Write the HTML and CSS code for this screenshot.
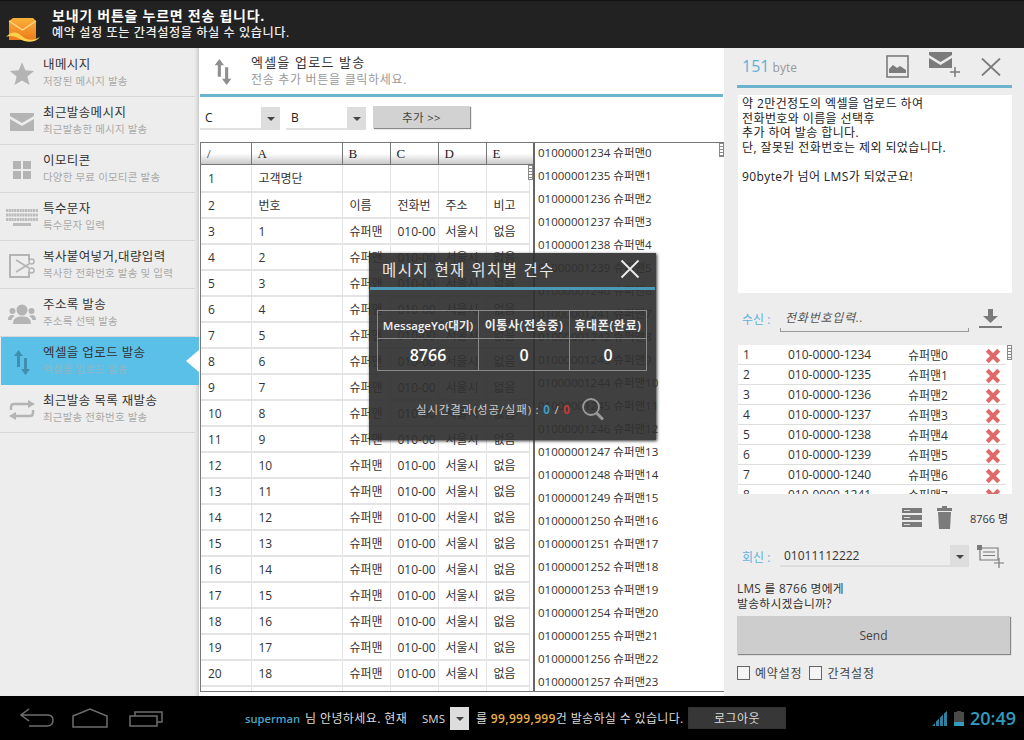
FILE: index.html
```html
<!DOCTYPE html>
<html lang="ko">
<head>
    <meta charset="UTF-8">
    <title>MessageYo</title>
    <link rel="stylesheet" href="styles.css">
</head>
<body>
<div class="app">

    <!-- top notice -->
    <div class="topbar">
        <svg class="top-mail" width="36" height="32" viewBox="0 0 36 32">
            <defs><linearGradient id="mailg" x1="0" y1="0" x2="0" y2="1"><stop offset="0" stop-color="#f9b13a"/><stop offset="1" stop-color="#ee7a1c"/></linearGradient></defs>
            <path d="M4 11 L8 8 H28 L31 11 V30 H4 Z" fill="url(#mailg)"/>
            <path d="M4 11 L17.500 20 L31 11" fill="none" stroke="#ffd98a" stroke-width="1.200"/>
            <path d="M1 27 C7 20 13 22 18 27 C23 31 30 30 35 27 C30 33 21 33 15 29 C10 26 5 25 1 27 Z" fill="#fbd24e"/>
        </svg>
        <div class="top-text">
            <div class="top-title">보내기 버튼을 누르면 전송 됩니다.</div>
            <div class="top-sub">예약 설정 또는 간격설정을 하실 수 있습니다.</div>
        </div>
    </div>

    <div class="middle">
        <!-- left menu -->
        <div class="menu">
            <div class="menu-item">
                <div class="menu-icon"><svg width="26" height="25" viewBox="0 0 28 26"><polygon class="ico" points="14,1 17.6,9.6 27,10.3 19.8,16.3 22.1,25.5 14,20.5 5.9,25.5 8.2,16.3 1,10.3 10.4,9.6"/></svg></div>
                <div><div class="menu-title">내메시지</div><div class="menu-sub">저장된 메시지 발송</div></div>
            </div>
            <div class="menu-item">
                <div class="menu-icon"><svg width="24" height="18" viewBox="0 0 24 18"><path class="ico" d="M0 0 H24 V3 L12 10 L0 3 Z M0 6 L12 13 L24 6 V18 H0 Z"/></svg></div>
                <div><div class="menu-title">최근발송메시지</div><div class="menu-sub">최근발송한 메시지 발송</div></div>
            </div>
            <div class="menu-item">
                <div class="menu-icon"><svg width="18" height="18" viewBox="0 0 18 18"><path class="ico" d="M0 0 H8 V8 H0 Z M10 0 H18 V8 H10 Z M0 10 H8 V18 H0 Z M10 10 H18 V18 H10 Z"/></svg></div>
                <div><div class="menu-title">이모티콘</div><div class="menu-sub">다양한 무료 이모티콘 발송</div></div>
            </div>
            <div class="menu-item">
                <div class="menu-icon"><svg width="32" height="18" viewBox="0 0 32 18"><path d="M0 1.5 H32 M0 6 H32 M0 10.500 H32" stroke="#bcbcbc" stroke-width="3" stroke-dasharray="2.200 .5"/><path d="M7 15.500 H25" stroke="#bcbcbc" stroke-width="3"/></svg></div>
                <div><div class="menu-title">특수문자</div><div class="menu-sub">특수문자 입력</div></div>
            </div>
            <div class="menu-item">
                <div class="menu-icon"><svg width="26" height="24" viewBox="0 0 26 24"><path d="M20 6 V1 H1 V23 H20 V18" fill="none" stroke="#b4b4b4" stroke-width="2"/><path d="M7 6 L20 14 M7 18 L20 10" stroke="#b4b4b4" stroke-width="1.600"/><circle cx="22.500" cy="7.500" r="2.500" fill="none" stroke="#b4b4b4" stroke-width="1.500"/><circle cx="22.500" cy="16.500" r="2.500" fill="none" stroke="#b4b4b4" stroke-width="1.500"/></svg></div>
                <div><div class="menu-title">복사붙여넣거,대량입력</div><div class="menu-sub">복사한 전화번호 발송 및 입력</div></div>
            </div>
            <div class="menu-item">
                <div class="menu-icon"><svg width="28" height="20" viewBox="0 0 28 20"><circle class="ico" cx="14" cy="6" r="5.500"/><path class="ico" d="M5 20 C5 14 9 12.500 14 12.500 C19 12.500 23 14 23 20 Z"/><circle class="ico" cx="4.500" cy="7" r="3"/><circle class="ico" cx="23.500" cy="7" r="3"/><path class="ico" d="M0 16 C0 12 2 11 4.500 11 L7 12 C5 13 4 14 3.500 16 Z M28 16 C28 12 26 11 23.500 11 L21 12 C23 13 24 14 24.500 16 Z"/></svg></div>
                <div><div class="menu-title">주소록 발송</div><div class="menu-sub">주소록 선택 발송</div></div>
            </div>
            <div class="menu-item active">
                <div class="menu-icon"><svg width="16" height="25" viewBox="0 0 16 25"><path class="ico-on" d="M4.500 0 L9 6 H6 V17 H3 V6 H0 Z M11.500 25 L7 19 H10 V8 H13 V19 H16 Z"/></svg></div>
                <div><div class="menu-title">엑셀을 업로드 발송</div><div class="menu-sub">엑셀을 업로드 발송</div></div>
            </div>
            <div class="menu-item">
                <div class="menu-icon"><svg width="26" height="20" viewBox="0 0 26 20"><path d="M2 10 V7 Q2 4 5 4 H20 M24 10 V13 Q24 16 21 16 H6" fill="none" stroke="#b4b4b4" stroke-width="2.400"/><path class="ico" d="M19 0 L26 4 L19 8 Z M7 12 L0 16 L7 20 Z"/></svg></div>
                <div><div class="menu-title">최근발송 목록 재발송</div><div class="menu-sub">최근발송 전화번호 발송</div></div>
            </div>
        </div>

        <!-- excel upload -->
        <div class="main">
            <div class="main-head">
                <svg class="main-arrows" width="20" height="26" viewBox="0 0 16 25"><path fill="#8f8f8f" d="M4.500 0 L9 6 H6 V17 H3 V6 H0 Z M11.500 25 L7 19 H10 V8 H13 V19 H16 Z"/></svg>
                <div>
                    <div class="main-title">엑셀을 업로드 발송</div>
                    <div class="main-sub">전송 추가 버튼을 클릭하세요.</div>
                </div>
            </div>
            <div class="tools">
                <div class="pick"><span class="pick-val">C</span><span class="drop"></span></div>
                <div class="pick"><span class="pick-val">B</span><span class="drop"></span></div>
                <button class="btn add-btn">추가 &gt;&gt;</button>
            </div>
            <div class="sheet-area">
                <div class="sheet">
                    <table class="sheet-head">
                        <tr><th class="c0">/</th><th class="c1">A</th><th class="c2">B</th><th class="c2">C</th><th class="c2">D</th><th class="c5">E</th></tr>
                    </table>
                    <table class="sheet-body">
                        <tr class="first"><td class="c0">1</td><td class="c1">고객명단</td><td class="c2"></td><td class="c2"></td><td class="c2"></td><td class="c6"></td></tr>
                        <tr><td>2</td><td>번호</td><td>이름</td><td>전화번</td><td>주소</td><td>비고</td></tr>
                        <tr><td>3</td><td>1</td><td>슈퍼맨</td><td>010-00</td><td>서울시</td><td>없음</td></tr>
                        <tr><td>4</td><td>2</td><td>슈퍼맨</td><td>010-00</td><td>서울시</td><td>없음</td></tr>
                        <tr><td>5</td><td>3</td><td>슈퍼맨</td><td>010-00</td><td>서울시</td><td>없음</td></tr>
                        <tr><td>6</td><td>4</td><td>슈퍼맨</td><td>010-00</td><td>서울시</td><td>없음</td></tr>
                        <tr><td>7</td><td>5</td><td>슈퍼맨</td><td>010-00</td><td>서울시</td><td>없음</td></tr>
                        <tr><td>8</td><td>6</td><td>슈퍼맨</td><td>010-00</td><td>서울시</td><td>없음</td></tr>
                        <tr><td>9</td><td>7</td><td>슈퍼맨</td><td>010-00</td><td>서울시</td><td>없음</td></tr>
                        <tr><td>10</td><td>8</td><td>슈퍼맨</td><td>010-00</td><td>서울시</td><td>없음</td></tr>
                        <tr><td>11</td><td>9</td><td>슈퍼맨</td><td>010-00</td><td>서울시</td><td>없음</td></tr>
                        <tr><td>12</td><td>10</td><td>슈퍼맨</td><td>010-00</td><td>서울시</td><td>없음</td></tr>
                        <tr><td>13</td><td>11</td><td>슈퍼맨</td><td>010-00</td><td>서울시</td><td>없음</td></tr>
                        <tr><td>14</td><td>12</td><td>슈퍼맨</td><td>010-00</td><td>서울시</td><td>없음</td></tr>
                        <tr><td>15</td><td>13</td><td>슈퍼맨</td><td>010-00</td><td>서울시</td><td>없음</td></tr>
                        <tr><td>16</td><td>14</td><td>슈퍼맨</td><td>010-00</td><td>서울시</td><td>없음</td></tr>
                        <tr><td>17</td><td>15</td><td>슈퍼맨</td><td>010-00</td><td>서울시</td><td>없음</td></tr>
                        <tr><td>18</td><td>16</td><td>슈퍼맨</td><td>010-00</td><td>서울시</td><td>없음</td></tr>
                        <tr><td>19</td><td>17</td><td>슈퍼맨</td><td>010-00</td><td>서울시</td><td>없음</td></tr>
                        <tr><td>20</td><td>18</td><td>슈퍼맨</td><td>010-00</td><td>서울시</td><td>없음</td></tr>
                        <tr><td></td><td></td><td></td><td></td><td></td><td></td></tr>
                    </table>
                    <span class="grip grip-sheet"></span>
                </div>
                <div class="numbers">
                    <span class="grip grip-nums"></span>
                    <div>01000001234 슈퍼맨0</div>
                    <div>01000001235 슈퍼맨1</div>
                    <div>01000001236 슈퍼맨2</div>
                    <div>01000001237 슈퍼맨3</div>
                    <div>01000001238 슈퍼맨4</div>
                    <div>01000001239 슈퍼맨5</div>
                    <div>01000001240 슈퍼맨6</div>
                    <div>01000001241 슈퍼맨7</div>
                    <div>01000001242 슈퍼맨8</div>
                    <div>01000001243 슈퍼맨9</div>
                    <div>01000001244 슈퍼맨10</div>
                    <div>01000001245 슈퍼맨11</div>
                    <div>01000001246 슈퍼맨12</div>
                    <div>01000001247 슈퍼맨13</div>
                    <div>01000001248 슈퍼맨14</div>
                    <div>01000001249 슈퍼맨15</div>
                    <div>01000001250 슈퍼맨16</div>
                    <div>01000001251 슈퍼맨17</div>
                    <div>01000001252 슈퍼맨18</div>
                    <div>01000001253 슈퍼맨19</div>
                    <div>01000001254 슈퍼맨20</div>
                    <div>01000001255 슈퍼맨21</div>
                    <div>01000001256 슈퍼맨22</div>
                    <div>01000001257 슈퍼맨23</div>
                </div>
            </div>
        </div>

        <!-- message composer -->
        <div class="side">
            <div class="side-top">
                <div class="bytes"><span class="bytes-num">151</span> <span class="bytes-unit">byte</span></div>
                <svg class="tool-img" width="23" height="23" viewBox="0 0 23 23"><rect x="1" y="1" width="21" height="21" fill="none" stroke="#7b7b7b" stroke-width="1.600"/><path fill="#7b7b7b" d="M3 18 V14 L7 10 L11 13 L14 11 L20 15 V18 Z"/></svg>
                <svg class="tool-mail" width="33" height="26" viewBox="0 0 33 26"><path fill="#7b7b7b" d="M0 0 H23 V3 L11.500 10 L0 3 Z M0 6 L11.500 13 L23 6 V16 H0 Z"/><path d="M26 15 V25 M21 20 H31" stroke="#7b7b7b" stroke-width="1.500"/></svg>
                <svg class="tool-x" width="20" height="18" viewBox="0 0 20 18"><path d="M1 0.500 L19 17.500 M19 0.500 L1 17.500" stroke="#7b7b7b" stroke-width="1.800"/></svg>
            </div>
            <div class="side-rule"></div>
            <div class="msg">약 2만건정도의 엑셀을 업로드 하여<br>전화번호와 이름을 선택후<br>추가 하여 발송 합니다.<br>단, 잘못된 전화번호는 제외 되었습니다.<br><br>90byte가 넘어 LMS가 되었군요!</div>

            <div class="to-row">
                <span class="blue-label">수신 :</span>
                <div class="to-input">전화번호입력..</div>
                <svg class="to-down" width="23" height="19" viewBox="0 0 23 19"><path fill="#7b7b7b" d="M9 0 H14 V7 H19 L11.500 14 L4 7 H9 Z"/><rect y="17" width="23" height="2" fill="#7b7b7b"/></svg>
            </div>

            <div class="to-list">
                <div class="to-item"><span class="n">1</span><span class="p">010-0000-1234</span><span class="w">슈퍼맨0</span><svg class="del" viewBox="0 0 14 14"><path d="M2 2 L12 12 M12 2 L2 12"/></svg></div>
                <div class="to-item"><span class="n">2</span><span class="p">010-0000-1235</span><span class="w">슈퍼맨1</span><svg class="del" viewBox="0 0 14 14"><path d="M2 2 L12 12 M12 2 L2 12"/></svg></div>
                <div class="to-item"><span class="n">3</span><span class="p">010-0000-1236</span><span class="w">슈퍼맨2</span><svg class="del" viewBox="0 0 14 14"><path d="M2 2 L12 12 M12 2 L2 12"/></svg></div>
                <div class="to-item"><span class="n">4</span><span class="p">010-0000-1237</span><span class="w">슈퍼맨3</span><svg class="del" viewBox="0 0 14 14"><path d="M2 2 L12 12 M12 2 L2 12"/></svg></div>
                <div class="to-item"><span class="n">5</span><span class="p">010-0000-1238</span><span class="w">슈퍼맨4</span><svg class="del" viewBox="0 0 14 14"><path d="M2 2 L12 12 M12 2 L2 12"/></svg></div>
                <div class="to-item"><span class="n">6</span><span class="p">010-0000-1239</span><span class="w">슈퍼맨5</span><svg class="del" viewBox="0 0 14 14"><path d="M2 2 L12 12 M12 2 L2 12"/></svg></div>
                <div class="to-item"><span class="n">7</span><span class="p">010-0000-1240</span><span class="w">슈퍼맨6</span><svg class="del" viewBox="0 0 14 14"><path d="M2 2 L12 12 M12 2 L2 12"/></svg></div>
                <div class="to-item"><span class="n">8</span><span class="p">010-0000-1241</span><span class="w">슈퍼맨7</span><svg class="del" viewBox="0 0 14 14"><path d="M2 2 L12 12 M12 2 L2 12"/></svg></div>
                <span class="grip grip-list"></span>
            </div>

            <div class="count-row">
                <svg width="20" height="20" viewBox="0 0 20 20"><path fill="#7b7b7b" d="M0 0 H20 V5 H0 Z M0 7 H20 V12 H0 Z M0 14 H20 V19 H0 Z"/><path d="M2 2.500 H8 M2 9.500 H8 M2 16.500 H8" stroke="#dcdcdc"/></svg>
                <svg class="trash" width="17" height="23" viewBox="0 0 17 23"><path fill="#7b7b7b" d="M6 0 H11 V2 H16 V5 H1 V2 H6 Z M2 6 H15 L14 23 H3 Z"/></svg>
                <span class="count">8766 명</span>
            </div>

            <div class="from-row">
                <span class="blue-label">회신 :</span>
                <div class="from-input"><span>01011112222</span><span class="drop"></span></div>
                <svg class="from-add" width="28" height="24" viewBox="0 0 28 24"><rect x="0" y="0" width="5" height="5" fill="#7b7b7b"/><path d="M3 3 H21 V15 H3 Z M6 7 H18 M6 10.500 H18" fill="none" stroke="#7b7b7b" stroke-width="1.200"/><path d="M22 13 V23 M17 18 H27" stroke="#7b7b7b" stroke-width="1.200"/></svg>
            </div>

            <div class="confirm">LMS 를 8766 명에게<br>발송하시겠습니까?</div>
            <button class="btn send-btn">Send</button>
            <div class="checks">
                <span class="box"></span><span class="check-label">예약설정</span>
                <span class="box"></span><span class="check-label">간격설정</span>
            </div>
        </div>
    </div>

    <!-- bottom system bar -->
    <div class="bottombar">
        <div class="nav-icons">
            <svg width="34" height="20" viewBox="0 0 34 20"><path d="M9 1 L1 7 L9 13 M1 7 H27 Q33 7 33 12 Q33 18 27 18 H9" fill="none" stroke="#6d6d6d" stroke-width="1.500"/></svg>
            <svg width="36" height="20" viewBox="0 0 36 20"><path d="M1 8 L18 1 L35 8 V19 H1 Z" fill="none" stroke="#6d6d6d" stroke-width="1.500"/></svg>
            <svg class="nav-recent" width="34" height="18" viewBox="0 0 34 18"><path d="M1 7 H28 V17 H1 Z M6 7 V3 H33 V13 H28" fill="none" stroke="#6d6d6d" stroke-width="1.500"/></svg>
        </div>
        <div class="status">
            <span class="user">superman</span><span class="hello">님 안녕하세요. 현재</span>
            <span class="sms">SMS</span><span class="drop drop-dark"></span>
            <span class="can">를 <b class="amount">99,999,999</b>건 발송하실 수 있습니다.</span>
            <button class="logout">로그아웃</button>
        </div>
        <svg class="signal" width="15" height="15" viewBox="0 0 15 15"><path fill="#2f7f9e" d="M0 15 L3 12 V15 Z M4 15 V10.500 L7 7.500 V15 Z M8 15 V6.500 L11 3.500 V15 Z M12 15 V2.500 L15 0 V15 Z"/></svg>
        <svg class="battery" width="10" height="15" viewBox="0 0 10 15"><path fill="#4a4a4a" d="M3 0 H7 V1 H10 V11 H0 V1 H3 Z"/><rect y="11" width="10" height="4" fill="#2f9cc0"/></svg>
        <span class="clock">20:49</span>
    </div>

    <!-- popup over the sheet -->
    <div class="popup">
        <div class="popup-head">
            <span class="popup-title">메시지 현재 위치별 건수</span>
            <svg width="20" height="20" viewBox="0 0 20 20"><path d="M1.500 1.500 L18.500 18.500 M18.500 1.500 L1.500 18.500" stroke="#eee" stroke-width="1.800"/></svg>
        </div>
        <table class="popup-table">
            <tr><th class="pc1">MessageYo(대기)</th><th class="pc2">이통사(전송중)</th><th class="pc3">휴대폰(완료)</th></tr>
            <tr><td>8766</td><td>0</td><td>0</td></tr>
        </table>
        <div class="popup-foot">
            <span>실시간결과(성공/실패) : <b class="ok">0</b> / <b class="bad">0</b></span>
            <svg width="24" height="24" viewBox="0 0 24 24"><circle cx="10" cy="10" r="8" fill="none" stroke="#9a9a9a" stroke-width="1.800"/><path d="M15.500 16 L22 22.500" stroke="#9a9a9a" stroke-width="3"/></svg>
        </div>
    </div>
</div>
</body>
</html>
```

FILE: styles.css
```css
*{box-sizing:border-box}
html,body{margin:0;padding:0}
body{font-family:"Open Sans","Noto Sans CJK KR",sans-serif;font-size:12px;color:#222}
.app{position:relative;width:1024px;height:740px;overflow:hidden;display:flex;flex-direction:column;background:#ededed}

/* top notice */
.topbar{height:48px;background:#222;display:flex;align-items:center;color:#fff;box-shadow:inset 0 1px 0 #111}
.top-mail{margin:3px 0 0 5px}
.top-text{margin-left:11px}
.top-title{font-size:14px;font-weight:700;line-height:18px;letter-spacing:.75px}
.top-sub{font-size:12.200px;line-height:16px;color:#eee;font-weight:500;letter-spacing:.55px}

.middle{flex:1;display:flex;min-height:0}

/* left menu */
.menu{width:199px;background:#ededed;box-shadow:inset -4px 0 4px -3px #bbb;padding:1px 4px 0 0}
.menu-item{height:48px;display:flex;align-items:center;border-bottom:1px solid #d6d6d6;position:relative}
.menu-icon{width:43px;display:flex;justify-content:center;padding-top:2px}
.menu-title{font-size:12.500px;line-height:16px;color:#333;letter-spacing:.4px}
.menu-sub{font-size:10.500px;line-height:16px;color:#aaa;letter-spacing:.2px}
.ico{fill:#b4b4b4}
.ico-on{fill:#3e8fb0}
.menu-item.active{background:#5bc0e8;margin:0 -4px 0 1px;border-bottom:0}
.menu-item.active .menu-icon{margin-left:-1px}
.menu-item.active .menu-sub{color:#8fb5c6}
.menu-item.active:after{content:"";position:absolute;right:0;top:13px;border-style:solid;border-width:11px 13px 11px 0;border-color:transparent #fff transparent transparent}

/* excel panel */
.main{width:525px;background:#fff;padding-left:1px}
.main-head{height:49px;display:flex;align-items:center;border-bottom:3px solid #6cb4cd;margin-right:1px}
.main-arrows{margin:2px 0 0 13px}
.main-title{margin-left:18px;font-size:13px;line-height:17px;color:#333;letter-spacing:1.200px}
.main-sub{margin-left:18px;font-size:12px;line-height:17px;color:#999;letter-spacing:.7px}
.tools{display:flex;height:45px;padding-top:10px}
.pick{width:80px;height:23px;margin-right:6px;display:flex;justify-content:space-between;border-bottom:2px solid #e2e2e2}
.pick-val{padding:2px 0 0 5px}
.drop{display:inline-block;position:relative;width:19px;height:23px;background:#ddd}
.drop:after{content:"";position:absolute;left:6px;top:10px;border-style:solid;border-width:4px 4px 0;border-color:#444 transparent transparent}
.btn{border:0;background:#d2d2d2;color:#444;font:inherit;box-shadow:1px 1px 1px #888;padding:0}
.add-btn{width:97px;height:22px;margin-left:1px;margin-top:-1px;font-size:11.500px;letter-spacing:.3px}

.sheet-area{height:550px;display:flex;border-top:1px solid #777;border-bottom:1px solid #777}
.sheet{position:relative;width:334px;border-left:1px solid #777;overflow:hidden;flex:none}
table{border-collapse:collapse;table-layout:fixed}
.sheet-head{width:333px}
.sheet-head th{height:21px;padding:1px 0 0 6px;text-align:left;font:13px "Liberation Serif",serif;color:#222;background:linear-gradient(#fff 50%,#c9c9c9);border-right:1px solid #777;border-bottom:1px solid #777}
.sheet-head .c5{border-right:0}
.c0{width:50px}
.c1{width:91px}
.c2{width:48px}
.c5{width:48px}
.c6{width:43px}
.sheet-body{width:328px}
.sheet-body td{height:26px;padding:1px 0 0 7px;font-size:12px;white-space:nowrap;overflow:hidden;border-right:1px solid #e4e4e4;border-bottom:2px solid #e4e4e4;color:#333}
.sheet-body .first td{height:27px}
.numbers{position:relative;flex:1;border-left:2px solid #666;padding:0 0 0 3px;overflow:hidden;font-size:11.500px;line-height:23px;color:#333;margin-left:-1px}
.numbers div{white-space:nowrap}
.numbers .grip + div{margin-top:-2px}
.grip{position:absolute;width:5px;border:1px solid #888;background:repeating-linear-gradient(#fff 0 2px,#888 2px 3px)}
.grip-sheet{right:1px;top:22px;height:15px}
.grip-nums{right:0;top:0;height:14px}

/* right side */
.side{width:300px;padding:0 12px 0 13px}
.side-top{height:37px;display:flex;align-items:center}
.bytes{margin:-2px 0 0 5px;width:144px}
.bytes-num{font-size:16px;color:#5fb0d8}
.bytes-unit{font-size:12px;color:#999}
.tool-mail{margin:-3px 0 0 20px}
.tool-x{margin:1px 0 0 19px}
.side-rule{height:3px;background:#6cb4cd}
.msg{height:198px;margin:7px 0 0 1px;background:#fff;padding:2px 4px;font-size:12px;line-height:14.500px;color:#222;letter-spacing:.4px}
.to-row{height:26px;margin-top:14px;display:flex;align-items:center;position:relative}
.blue-label{margin-left:5px;width:38px;color:#62b3dc;font-size:12px;flex:none}
.to-row .blue-label{margin-top:-3px}
.to-input{width:189px;height:24px;border-bottom:1px solid #999;padding:0 0 0 5px;font-style:italic;color:#555;font-size:12px;letter-spacing:.8px;background:linear-gradient(#999,#999) left bottom/1px 3px no-repeat,linear-gradient(#999,#999) right bottom/1px 3px no-repeat}
.to-down{margin-left:10px;margin-top:-4px}
.to-list{position:relative;height:149px;margin:12px 0 0 1px;background:#fff;overflow:hidden;padding-right:6px;font-size:12px}
.to-item{height:20px;display:flex;align-items:center;border-bottom:1px solid #ddd;color:#333}
.to-item .n{width:50px;padding-left:5px}
.to-item .p{width:120px}
.to-item .w{width:77px}
.del{width:16px;height:16px;margin-top:2px}
.del path{stroke:#df6a6a;stroke-width:3.600;fill:none}
.grip-list{right:0;top:0;height:15px}
.count-row{height:27px;margin-top:10px;display:flex;align-items:center;padding-left:165px}
.trash{margin-left:14px}
.count{margin-left:17px;font-size:11px;color:#333}
.from-row{height:24px;margin-top:14px;display:flex;align-items:center}
.from-input{width:189px;height:22px;margin-top:-2px;display:flex;justify-content:space-between;border-bottom:2px solid #ddd;padding-left:4px;line-height:22px;color:#333}
.from-input .drop{height:21px}
.from-add{margin:0 0 0 8px}
.confirm{margin-top:12px;font-size:11.800px;line-height:15px;color:#333;letter-spacing:.3px}
.send-btn{display:block;width:273px;height:38px;margin-top:5px;font-size:12px;background:#cdcdcd}
.checks{display:flex;align-items:center;margin-top:10px;color:#444}
.box{width:13px;height:14px;border:1px solid #666;background:#f4f4f4;margin-right:5px}
.check-label{margin-right:7px;font-size:12px;letter-spacing:.8px}

/* bottom bar */
.bottombar{height:44px;background:#000;display:flex;align-items:center;color:#ddd;font-size:12px}
.nav-icons{display:flex;width:245px;padding-left:20px;gap:18px;align-items:center;flex:none}
.nav-recent{margin-left:3px}
.status{display:flex;align-items:center;width:687px;flex:none}
.user{width:60px;color:#4fa3c7;font-weight:600;font-size:11.200px}
.hello{width:117px;letter-spacing:.4px;white-space:nowrap}
.sms{width:28px;font-size:11.500px}
.drop-dark{height:23px;background:#ddd;margin-right:7px}
.amount{color:#eab04b;font-weight:600}
.can{width:212px;white-space:nowrap;letter-spacing:.35px}
.logout{width:98px;height:22px;border:1px solid #333;background:#373737;color:#ddd;font:inherit;padding:0;letter-spacing:.5px}
.battery{margin-left:7px}
.clock{margin-left:6px;font-size:18px;font-weight:600;color:#2f9cc0}

/* popup */
.popup{position:absolute;left:369px;top:253px;width:287px;height:187px;background:rgba(48,48,48,.92);box-shadow:1px 1px 3px #333;color:#ddd}
.popup-head{height:37px;margin:0 1px;display:flex;align-items:center;justify-content:space-between;padding:0 15px 2px 12px;border-bottom:3px solid #4a9ab5}
.popup-title{font-size:15.500px;color:#e8e8e8;letter-spacing:1.400px}
.popup-table{width:270px;margin:20px 0 0 8px;color:#fff}
.popup-table th,.popup-table td{border:1px solid #8a8a8a;padding:0;text-align:center}
.popup-table th{height:28px;font-size:12px;font-weight:600;color:#eee;letter-spacing:.6px}
.popup-table .pc1{font-size:11.500px;letter-spacing:0}
.popup-table td{height:32px;font-size:16px;font-weight:600}
.pc1{width:101px}
.pc2{width:91px}
.popup-foot{display:flex;align-items:center;margin-top:26px;padding-left:47px;font-size:11.500px;color:#ccc;letter-spacing:.8px}
.popup-foot svg{margin-left:10px}
.ok{color:#3f9ac4}
.bad{color:#c23b3b}
```
